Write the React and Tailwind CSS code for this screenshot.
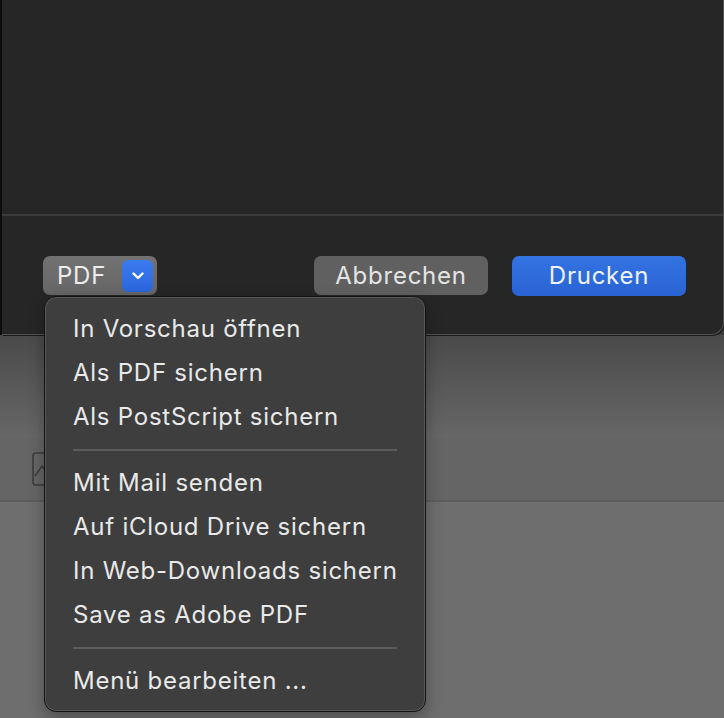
import React from "react";

const font = { fontFamily: "Inter, 'Liberation Sans', sans-serif" };

function Sep() {
  return (
    <div className="h-[22px] flex items-center px-[28px]">
      <div className="h-[2px] w-full bg-[#5b5c5b]" />
    </div>
  );
}

function Item({ children }) {
  return (
    <div className="h-[44px] flex items-center pl-[28px] text-[24px] text-[#e9e9e9] tracking-[0.75px]">
      {children}
    </div>
  );
}

export default function App() {
  return (
    <div className="relative w-[724px] h-[718px] overflow-hidden bg-[#6e6e6e]" style={font}>
      {/* Dialog */}
      <div className="flex h-[335px] bg-[#3a3a3a]">
        <div className="w-[2px] bg-[#0c0c0c]" />
        <div className="flex-1 flex flex-col bg-[#252625] rounded-br-[13px] border-r border-b border-[#525352] shadow-[1px_1px_0_0_#1a1a1a]">
          <div className="h-[214px]" />
          <div className="h-[2px] bg-[#3a3b3a]" />
          <div className="flex items-start pt-[40px] pl-[41px] pr-[37px] text-[24px] tracking-[0.75px]">
            <div className="flex items-center h-[39px] w-[114px] rounded-[7px] bg-gradient-to-b from-[#727272] to-[#666666] pl-[14px] pr-[4px] text-[#ececec]">
              <span>PDF</span>
              <div className="ml-auto flex items-center justify-center w-[31px] h-[32px] rounded-[6px] bg-gradient-to-b from-[#3a7bef] to-[#2b66dc]">
                <svg width="12" height="8" viewBox="0 0 12 8">
                  <path d="M1.5 1.5 L6 6 L10.5 1.5" fill="none" stroke="white" strokeWidth="2.4" strokeLinecap="round" strokeLinejoin="round" />
                </svg>
              </div>
            </div>
            <div className="ml-auto flex items-center justify-center h-[39px] w-[174px] rounded-[7px] bg-[#5f605f] text-[#e4e4e4]">
              Abbrechen
            </div>
            <div className="ml-[24px] flex items-center justify-center h-[40px] w-[174px] rounded-[7px] bg-gradient-to-b from-[#3373e2] to-[#2a63d3] text-[#eef2fb]">
              Drucken
            </div>
          </div>
        </div>
      </div>

      {/* Background below dialog */}
      <div className="h-[103px] bg-gradient-to-b from-[#4a4a4a] to-[#676767]" />
      <div className="h-[62px] bg-[#656565] flex items-center pl-[32px]">
        <svg width="26" height="34" viewBox="0 0 26 34">
          <rect x="1" y="1" width="24" height="32" rx="3" fill="none" stroke="#3c3c3c" strokeWidth="1.6" />
          <path d="M3 24 L10 14 L16 22" fill="none" stroke="#3c3c3c" strokeWidth="1.6" />
        </svg>
      </div>
      <div className="h-[2px] bg-[#5c5c5c]" />

      {/* Menu overlay */}
      <div className="absolute left-[44px] top-[296px] w-[382px] h-[416px] rounded-[12px] bg-[#3d3e3d] border border-[#141414] shadow-[inset_0_0_0_1px_#555655,0_6px_16px_rgba(0,0,0,0.3)] pt-[10px] pb-[8px]">
        <Item>In Vorschau öffnen</Item>
        <Item>Als PDF sichern</Item>
        <Item>Als PostScript sichern</Item>
        <Sep />
        <Item>Mit Mail senden</Item>
        <Item>Auf iCloud Drive sichern</Item>
        <Item>In Web-Downloads sichern</Item>
        <Item>Save as Adobe PDF</Item>
        <Sep />
        <Item>Menü bearbeiten ...</Item>
      </div>
    </div>
  );
}
